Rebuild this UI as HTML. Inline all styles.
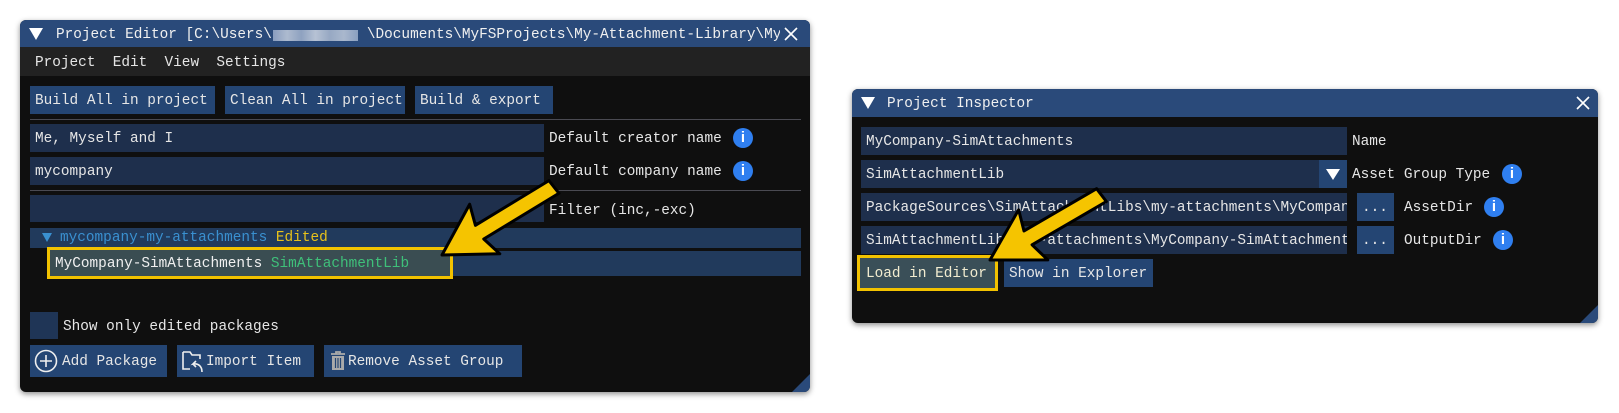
<!DOCTYPE html>
<html><head><meta charset="utf-8"><style>
*{margin:0;padding:0;box-sizing:border-box}
body{width:1619px;height:413px;background:#fff;position:relative;overflow:hidden;font-family:"Liberation Mono",monospace;font-size:14.4px;color:#e6e6e6}
.a{position:absolute}
.win{position:absolute;background:#0f0f0f;border-radius:6px;box-shadow:0 2px 6px rgba(0,0,0,.45);overflow:hidden}
.tb{position:absolute;left:0;right:0;top:0;background:#2a4a7a}
.t{position:absolute;white-space:pre;line-height:21px}
.in{position:absolute;background:#1e2f4c}
.bt{position:absolute;background:#244573}
.info{position:absolute;width:20px;height:20px;border-radius:50%;background:#2f7ff0;color:#fff;font:bold 15px "Liberation Sans",sans-serif;text-align:center;line-height:20px}
.grip{position:absolute;right:0;bottom:0;width:0;height:0;border-left:18px solid transparent;border-bottom:18px solid #2a4a7a}
</style></head><body>

<!-- Left window -->
<div class="win" style="left:20px;top:20px;width:790px;height:372px">
  <div class="tb" style="height:27px"></div>
  <div class="a" style="left:9px;top:8px;width:0;height:0;border-left:7px solid transparent;border-right:7px solid transparent;border-top:12px solid #fff"></div>
  <div class="t" style="left:36px;top:5px;color:#f0f0f0">Project Editor [C:\Users\           \Documents\MyFSProjects\My-Attachment-Library\My</div>
  <div class="a" style="left:253px;top:10px;width:85px;height:11px;background:linear-gradient(90deg,#9aaccb,#c4cede,#a0b1cc,#cfd7e4,#aab9d0,#c0cbdc,#9cafcc);opacity:.85"></div>
  <div class="a" style="left:760px;top:0px;width:30px;height:27px;background:#2a4a7a"></div>
  <svg class="a" style="left:764px;top:7px" width="14" height="14"><path d="M1 1L13 13M13 1L1 13" stroke="#fff" stroke-width="1.6"/></svg>
  <div class="a" style="left:0;top:27px;width:790px;height:29px;background:#222"></div>
  <div class="t" style="left:15px;top:33px">Project  Edit  View  Settings</div>

  <div class="bt" style="left:10px;top:66px;width:185px;height:28px"></div><div class="t" style="left:15px;top:71px">Build All in project</div>
  <div class="bt" style="left:205px;top:66px;width:180px;height:28px"></div><div class="t" style="left:210px;top:71px">Clean All in project</div>
  <div class="bt" style="left:395px;top:66px;width:138px;height:28px"></div><div class="t" style="left:400px;top:71px">Build &amp; export</div>
  <div class="a" style="left:10px;top:99px;width:771px;height:1px;background:#4a4a52"></div>

  <div class="in" style="left:10px;top:104px;width:514px;height:28px"></div><div class="t" style="left:15px;top:109px">Me, Myself and I</div>
  <div class="t" style="left:529px;top:109px">Default creator name</div><div class="info" style="left:713px;top:108px">i</div>
  <div class="in" style="left:10px;top:137px;width:514px;height:28px"></div><div class="t" style="left:15px;top:142px">mycompany</div>
  <div class="t" style="left:529px;top:142px">Default company name</div><div class="info" style="left:713px;top:141px">i</div>
  <div class="a" style="left:10px;top:170px;width:771px;height:1px;background:#4a4a52"></div>
  <div class="in" style="left:10px;top:175px;width:514px;height:27px"></div>
  <div class="t" style="left:529px;top:181px">Filter (inc,-exc)</div>

  <div class="a" style="left:10px;top:208px;width:771px;height:20px;background:#213a5c"></div>
  <div class="a" style="left:22px;top:213px;width:0;height:0;border-left:5px solid transparent;border-right:5px solid transparent;border-top:9px solid #3a90d0"></div>
  <div class="t" style="left:40px;top:208px;color:#3a90d0">mycompany-my-attachments <span style="color:#e8c21a">Edited</span></div>
  <div class="a" style="left:28px;top:231px;width:753px;height:25px;background:#213a5c"></div>
  <div class="a" style="left:27px;top:227px;width:406px;height:32px;background:#3a4d52;border:3px solid #f2c200"></div>
  <div class="t" style="left:35px;top:234px;color:#f0f0f0">MyCompany-SimAttachments <span style="color:#3fc07a">SimAttachmentLib</span></div>

  <div class="in" style="left:10px;top:292px;width:28px;height:27px;background:#1f3556"></div>
  <div class="t" style="left:43px;top:297px">Show only edited packages</div>

  <div class="bt" style="left:10px;top:325px;width:137px;height:32px"></div>
  <svg class="a" style="left:14px;top:329px" width="24" height="24"><circle cx="12" cy="12" r="10.5" fill="none" stroke="#eee" stroke-width="1.6"/><path d="M12 6V18M6 12H18" stroke="#eee" stroke-width="1.6"/></svg>
  <div class="t" style="left:42px;top:332px">Add Package</div>
  <div class="bt" style="left:157px;top:325px;width:137px;height:32px"></div>
  <svg class="a" style="left:161px;top:328px" width="26" height="26"><path d="M2 4H9L11 7H19V11M2 4V21H9" fill="none" stroke="#eee" stroke-width="1.6"/><path d="M21 24C21 18 17 15 12 16L15 13M12 16L15 19" fill="none" stroke="#eee" stroke-width="1.6"/></svg>
  <div class="t" style="left:186px;top:332px">Import Item</div>
  <div class="bt" style="left:304px;top:325px;width:198px;height:32px"></div>
  <svg class="a" style="left:308px;top:329px" width="20" height="24"><path d="M3 5H17M8 5V3H12V5" stroke="#aaa" stroke-width="1.8" fill="none"/><rect x="4" y="7" width="12" height="14" fill="#aaa"/><path d="M7.5 9V19M10 9V19M12.5 9V19" stroke="#244573" stroke-width="1.2"/></svg>
  <div class="t" style="left:328px;top:332px">Remove Asset Group</div>
  <div class="grip"></div>
</div>

<!-- Right window -->
<div class="win" style="left:852px;top:89px;width:746px;height:234px">
  <div class="tb" style="height:28px"></div>
  <div class="a" style="left:9px;top:8px;width:0;height:0;border-left:7px solid transparent;border-right:7px solid transparent;border-top:12px solid #fff"></div>
  <div class="t" style="left:35px;top:5px;color:#f0f0f0">Project Inspector</div>
  <svg class="a" style="left:724px;top:7px" width="14" height="14"><path d="M1 1L13 13M13 1L1 13" stroke="#fff" stroke-width="1.6"/></svg>

  <div class="in" style="left:9px;top:38px;width:486px;height:28px"></div><div class="t" style="left:14px;top:43px">MyCompany-SimAttachments</div>
  <div class="t" style="left:500px;top:43px">Name</div>
  <div class="in" style="left:9px;top:71px;width:486px;height:28px"></div><div class="t" style="left:14px;top:76px">SimAttachmentLib</div>
  <div class="bt" style="left:467px;top:71px;width:28px;height:28px"></div>
  <div class="a" style="left:474px;top:80px;width:0;height:0;border-left:7px solid transparent;border-right:7px solid transparent;border-top:11px solid #fff"></div>
  <div class="t" style="left:500px;top:76px">Asset Group Type</div><div class="info" style="left:650px;top:75px">i</div>
  <div class="in" style="left:9px;top:104px;width:486px;height:28px;overflow:hidden"><div class="t" style="left:5px;top:5px">PackageSources\SimAttachmentLibs\my-attachments\MyCompany</div></div>
  <div class="bt" style="left:505px;top:104px;width:37px;height:28px"></div><div class="t" style="left:510px;top:109px">...</div>
  <div class="t" style="left:552px;top:109px">AssetDir</div><div class="info" style="left:632px;top:108px">i</div>
  <div class="in" style="left:9px;top:137px;width:486px;height:28px;overflow:hidden"><div class="t" style="left:5px;top:5px">SimAttachmentLibs\my-attachments\MyCompany-SimAttachments</div></div>
  <div class="bt" style="left:505px;top:137px;width:37px;height:28px"></div><div class="t" style="left:510px;top:142px">...</div>
  <div class="t" style="left:552px;top:142px">OutputDir</div><div class="info" style="left:641px;top:141px">i</div>

  <div class="a" style="left:5px;top:166px;width:141px;height:36px;background:#3a4f58;border:3px solid #f2c200"></div>
  <div class="t" style="left:14px;top:175px;color:#f2ecd0">Load in Editor</div>
  <div class="bt" style="left:152px;top:170px;width:149px;height:28px"></div><div class="t" style="left:157px;top:175px">Show in Explorer</div>
  <div class="grip"></div>
</div>

<!-- arrows -->
<svg class="a" style="left:0;top:0" width="1619" height="413">
  <g transform="translate(442,255) rotate(-31.3)"><polygon points="0,0 50,-29 44,-8 130,-8 132,8 44,8 50,29" fill="#f5c400" stroke="#000" stroke-width="3" stroke-linejoin="round"/></g>
  <g transform="translate(990,260) rotate(-30.2)"><polygon points="0,0 50,-29 44,-8 128,-8 130,8 44,8 50,29" fill="#f5c400" stroke="#000" stroke-width="3" stroke-linejoin="round"/></g>
</svg>
</body></html>
